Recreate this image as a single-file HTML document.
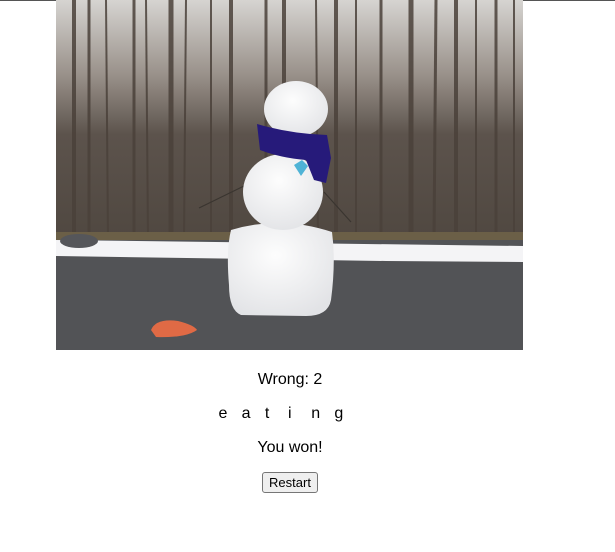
<!DOCTYPE html>
<html><head><style>
html,body{margin:0;padding:0;background:#fff;width:615px;height:552px;overflow:hidden}
.top{position:absolute;left:0;top:0;width:615px;height:1px;background:#555}
svg{position:absolute;left:56px;top:0}
.t{position:absolute;left:0;width:580px;text-align:center;font-family:"Liberation Sans",sans-serif;font-size:16px;color:#000}
.w span{display:inline-block;width:23.2px;text-align:left}
button{font-family:"Liberation Sans",sans-serif;font-size:13px;padding:1px 6px;border:1px solid #767676;border-radius:3px;background:#efefef;color:#000;height:21px}
</style></head><body>
<div class="top"></div>
<svg width="467" height="350" viewBox="0 0 467 350">
<defs>
<linearGradient id="sky" x1="0" y1="0" x2="0" y2="1">
<stop offset="0" stop-color="#d6d4d1"/><stop offset="0.3" stop-color="#9a928b"/><stop offset="0.55" stop-color="#5c534c"/><stop offset="1" stop-color="#4f4740"/>
</linearGradient>
<radialGradient id="snow" cx="0.45" cy="0.35" r="0.7"><stop offset="0" stop-color="#fdfdfd"/><stop offset="1" stop-color="#e2e3e6"/></radialGradient>
</defs>
<rect width="467" height="245" fill="url(#sky)"/>
<g stroke="#4a413a" stroke-opacity="0.85">
<line x1="18" y1="0" x2="18" y2="240" stroke-width="4"/>
<line x1="33" y1="0" x2="33" y2="240" stroke-width="3"/>
<line x1="50" y1="0" x2="52" y2="240" stroke-width="2"/>
<line x1="78" y1="0" x2="78" y2="240" stroke-width="3"/>
<line x1="90" y1="0" x2="92" y2="240" stroke-width="2"/>
<line x1="115" y1="0" x2="115" y2="240" stroke-width="5"/>
<line x1="130" y1="0" x2="128" y2="240" stroke-width="2"/>
<line x1="155" y1="0" x2="155" y2="240" stroke-width="2"/>
<line x1="175" y1="0" x2="175" y2="240" stroke-width="4"/>
<line x1="210" y1="0" x2="210" y2="240" stroke-width="3"/>
<line x1="228" y1="0" x2="228" y2="240" stroke-width="4"/>
<line x1="260" y1="0" x2="262" y2="240" stroke-width="2"/>
<line x1="280" y1="0" x2="280" y2="240" stroke-width="4"/>
<line x1="300" y1="0" x2="300" y2="240" stroke-width="2"/>
<line x1="325" y1="0" x2="325" y2="240" stroke-width="3"/>
<line x1="355" y1="0" x2="355" y2="240" stroke-width="5"/>
<line x1="380" y1="0" x2="378" y2="240" stroke-width="3"/>
<line x1="400" y1="0" x2="400" y2="240" stroke-width="4"/>
<line x1="420" y1="0" x2="420" y2="240" stroke-width="2"/>
<line x1="440" y1="0" x2="440" y2="240" stroke-width="3"/>
<line x1="458" y1="0" x2="458" y2="240" stroke-width="2"/>
</g>
<rect y="232" width="467" height="10" fill="#6b5f47"/>
<rect y="240" width="467" height="110" fill="#525356"/>
<path d="M0 240 L467 246 L467 262 L330 261 L0 256 Z" fill="#f4f4f6"/>
<ellipse cx="23" cy="241" rx="19" ry="7" fill="#55565a"/>
<g stroke="#3a3530" stroke-width="1.2" fill="none">
<path d="M143 208 L190 185"/><path d="M268 192 L295 222"/>
</g>
<path d="M175 230 Q225 215 276 232 Q280 262 275 300 Q272 316 250 316 L185 315 Q173 310 173 285 Q170 250 175 230 Z" fill="url(#snow)"/>
<ellipse cx="227" cy="192" rx="40" ry="38" fill="url(#snow)"/>
<ellipse cx="240" cy="109" rx="32" ry="28" fill="url(#snow)"/>
<path d="M201 124 Q235 134 271 135 L275 158 L270 183 L258 180 L250 160 Q225 158 204 150 Z" fill="#261a7a"/>
<path d="M238 165 L246 160 L252 166 L245 176 Z" fill="#4fb3d6"/>
<path d="M95 330 Q100 318 122 321 Q138 325 141 330 Q130 338 100 337 Z" fill="#e06a45"/>
</svg>
<div class="t" style="top:371px">Wrong: 2</div>
<div class="t w" style="top:405px;left:-2px"><span>e</span><span>a</span><span>t</span><span>i</span><span>n</span><span>g</span></div>
<div class="t" style="top:439px">You won!</div>
<div class="t" style="top:472px"><button>Restart</button></div>
</body></html>
